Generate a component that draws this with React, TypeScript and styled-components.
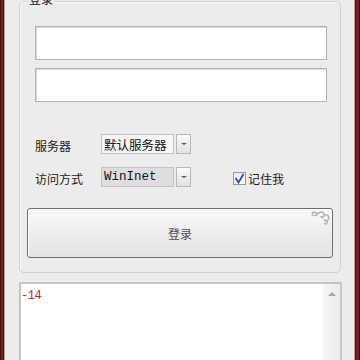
import React from "react";
import styled, { createGlobalStyle } from "styled-components";

const Global = createGlobalStyle`
  html, body { margin: 0; padding: 0; background: #ececec; }
  body { font-family: "Noto Sans CJK SC", "Liberation Sans", sans-serif; font-size: 12px; color: #1a1a1a; }
  * { box-sizing: border-box; }
`;

const Frame = styled.div`
  width: 360px;
  height: 360px;
  display: flex;
  overflow: hidden;
  background: #ececec;
`;

const EdgeLeft = styled.div`
  width: 5px;
  flex: none;
  background: linear-gradient(90deg, #3e0e0e 0 1px, #6e2424 1px 3px, #421010 3px 4px, #c49a9a 4px 5px);
`;

const EdgeRight = styled.div`
  width: 6px;
  flex: none;
  background: linear-gradient(90deg, #c8a0a0 0 1px, #421010 1px 2px, #6e2424 2px 5px, #3e0e0e 5px 6px);
`;

const Main = styled.div`
  flex: 1;
  padding: 1px 13px 0 14px;
  display: flex;
  flex-direction: column;
`;

const Group = styled.div`
  position: relative;
  border: 1px solid #d2d2ca;
  box-shadow: inset 1px 1px 0 #f8f8f8;
  border-radius: 5px;
  padding: 24px 13px 14px 15px;
  display: flex;
  flex-direction: column;
`;

const GroupTitle = styled.span`
  position: absolute;
  left: 7px;
  top: -11px;
  padding: 0 2px;
  background: #ececec;
  font-size: 12px;
  line-height: 16px;
  color: #111;
`;

const TextInput = styled.div<{ $first?: boolean }>`
  height: 34px;
  margin-top: ${(p) => (p.$first ? 0 : 8)}px;
  background: #fff;
  border: 1px solid #aeb4b9;
  box-shadow: inset 1px 1px 0 #d6dadd;
`;

const Row = styled.div<{ $top: number }>`
  display: flex;
  align-items: center;
  height: 20px;
  margin-top: ${(p) => p.$top}px;
`;

const Label = styled.span`
  width: 66px;
  flex: none;
  font-size: 12px;
  line-height: 16px;
  padding-top: 3px;
  color: #1a1a1a;
`;

const Combo = styled.div`
  display: flex;
  align-items: stretch;
  height: 20px;
  width: 90px;
  gap: 2px;
`;

const ComboText = styled.div<{ $grey?: boolean; $mono?: boolean }>`
  flex: 1;
  border: 1px solid #c4c4c4;
  background: ${(p) => (p.$grey ? "#dedede" : "#f6f6f6")};
  padding-left: 2px;
  display: flex;
  align-items: center;
  font-family: ${(p) =>
    p.$mono ? '"Liberation Mono", monospace' : '"Noto Sans CJK SC", sans-serif'};
  font-size: 12.5px;
  font-weight: 400;
  color: #111;
  white-space: nowrap;
  overflow: hidden;
`;

const ComboButton = styled.div`
  width: 15px;
  flex: none;
  border: 1px solid #b8b8b8;
  background: linear-gradient(#fafafa, #e2e2e2);
  display: flex;
  align-items: center;
  justify-content: center;
`;

const Arrow = styled.span`
  width: 0;
  height: 0;
  border-left: 3px solid transparent;
  border-right: 3px solid transparent;
  border-top: 2px solid #555;
`;

const Check = styled.label`
  display: flex;
  align-items: center;
  margin-left: 42px;
  padding-top: 3px;
  gap: 2px;
  font-size: 12px;
  color: #1a1a1a;
`;

const CheckBox = styled.span`
  width: 13px;
  height: 13px;
  border: 1px solid #8d9aab;
  background: linear-gradient(#e8ecf2, #f8f9fb);
  display: flex;
  align-items: center;
  justify-content: center;
`;

const LoginButton = styled.div`
  position: relative;
  margin: 21px -6px 0 -8px;
  height: 50px;
  border: 1px solid #6e6e6e;
  border-radius: 3px;
  background: linear-gradient(#fbfbfb, #ededed 50%, #e4e4e4);
  box-shadow: inset 1px 1px 0 #fff;
  display: flex;
  align-items: center;
  justify-content: center;
  font-size: 12px;
  color: #4b4b5c;
`;

const Swirl = styled.svg`
  position: absolute;
  right: 1px;
  top: 1px;
`;

const Log = styled.div`
  position: relative;
  margin: 9px -1px 0 0;
  flex: 1;
  min-height: 100px;
  background: #fff;
  border: 2px solid #c2c4c6;
  border-right-color: #c8cacc;
  padding: 1px 0 0 0;
`;

const LogText = styled.span`
  font-family: "Liberation Mono", monospace;
  font-size: 12px;
  line-height: 14px;
  color: #cc2020;
  letter-spacing: -0.5px;
`;

const Scroll = styled.div`
  position: absolute;
  right: 0;
  top: 0;
  bottom: 0;
  width: 17px;
  background: linear-gradient(90deg, #f7f7f7, #ebebeb);
  display: flex;
  justify-content: center;
  padding-top: 8px;
`;

const UpArrow = styled.span`
  width: 0;
  height: 0;
  border-left: 4px solid transparent;
  border-right: 4px solid transparent;
  border-bottom: 4px solid #a8a8a8;
`;

export default function App() {
  return (
    <>
      <Global />
      <Frame>
        <EdgeLeft />
        <Main>
          <Group>
            <GroupTitle>登录</GroupTitle>
            <TextInput $first />
            <TextInput />
            <Row $top={32}>
              <Label>服务器</Label>
              <Combo>
                <ComboText>默认服务器</ComboText>
                <ComboButton>
                  <Arrow />
                </ComboButton>
              </Combo>
            </Row>
            <Row $top={13}>
              <Label>访问方式</Label>
              <Combo>
                <ComboText $grey $mono>WinInet</ComboText>
                <ComboButton>
                  <Arrow />
                </ComboButton>
              </Combo>
              <Check>
                <CheckBox>
                  <svg width="11" height="11" viewBox="0 0 11 11">
                    <path d="M1.5 5 L4.5 9.5 L9.5 1" fill="none" stroke="#3050a8" strokeWidth="1.8" />
                  </svg>
                </CheckBox>
                记住我
              </Check>
            </Row>
            <LoginButton>
              登录
              <Swirl width="22" height="16" viewBox="0 0 22 16">
                <path d="M4 6 C2 3 5 1 7 3 C8.5 4.5 6.5 6.5 5.5 5" fill="none" stroke="#b4b4b4" strokeWidth="1.6" />
                <path d="M8 5 C10 1 15 1 15 5 C15 8 12 8 12 6" fill="none" stroke="#b4b4b4" strokeWidth="1.6" />
                <path d="M15 5 C19 4 21 7 19 10 C17.5 12 15 11 16 9" fill="none" stroke="#b4b4b4" strokeWidth="1.6" />
                <path d="M18 11 C19 14 16 15 15 13" fill="none" stroke="#b4b4b4" strokeWidth="1.4" />
              </Swirl>
            </LoginButton>
          </Group>
          <Log>
            <LogText>-14</LogText>
            <Scroll>
              <UpArrow />
            </Scroll>
          </Log>
        </Main>
        <EdgeRight />
      </Frame>
    </>
  );
}
